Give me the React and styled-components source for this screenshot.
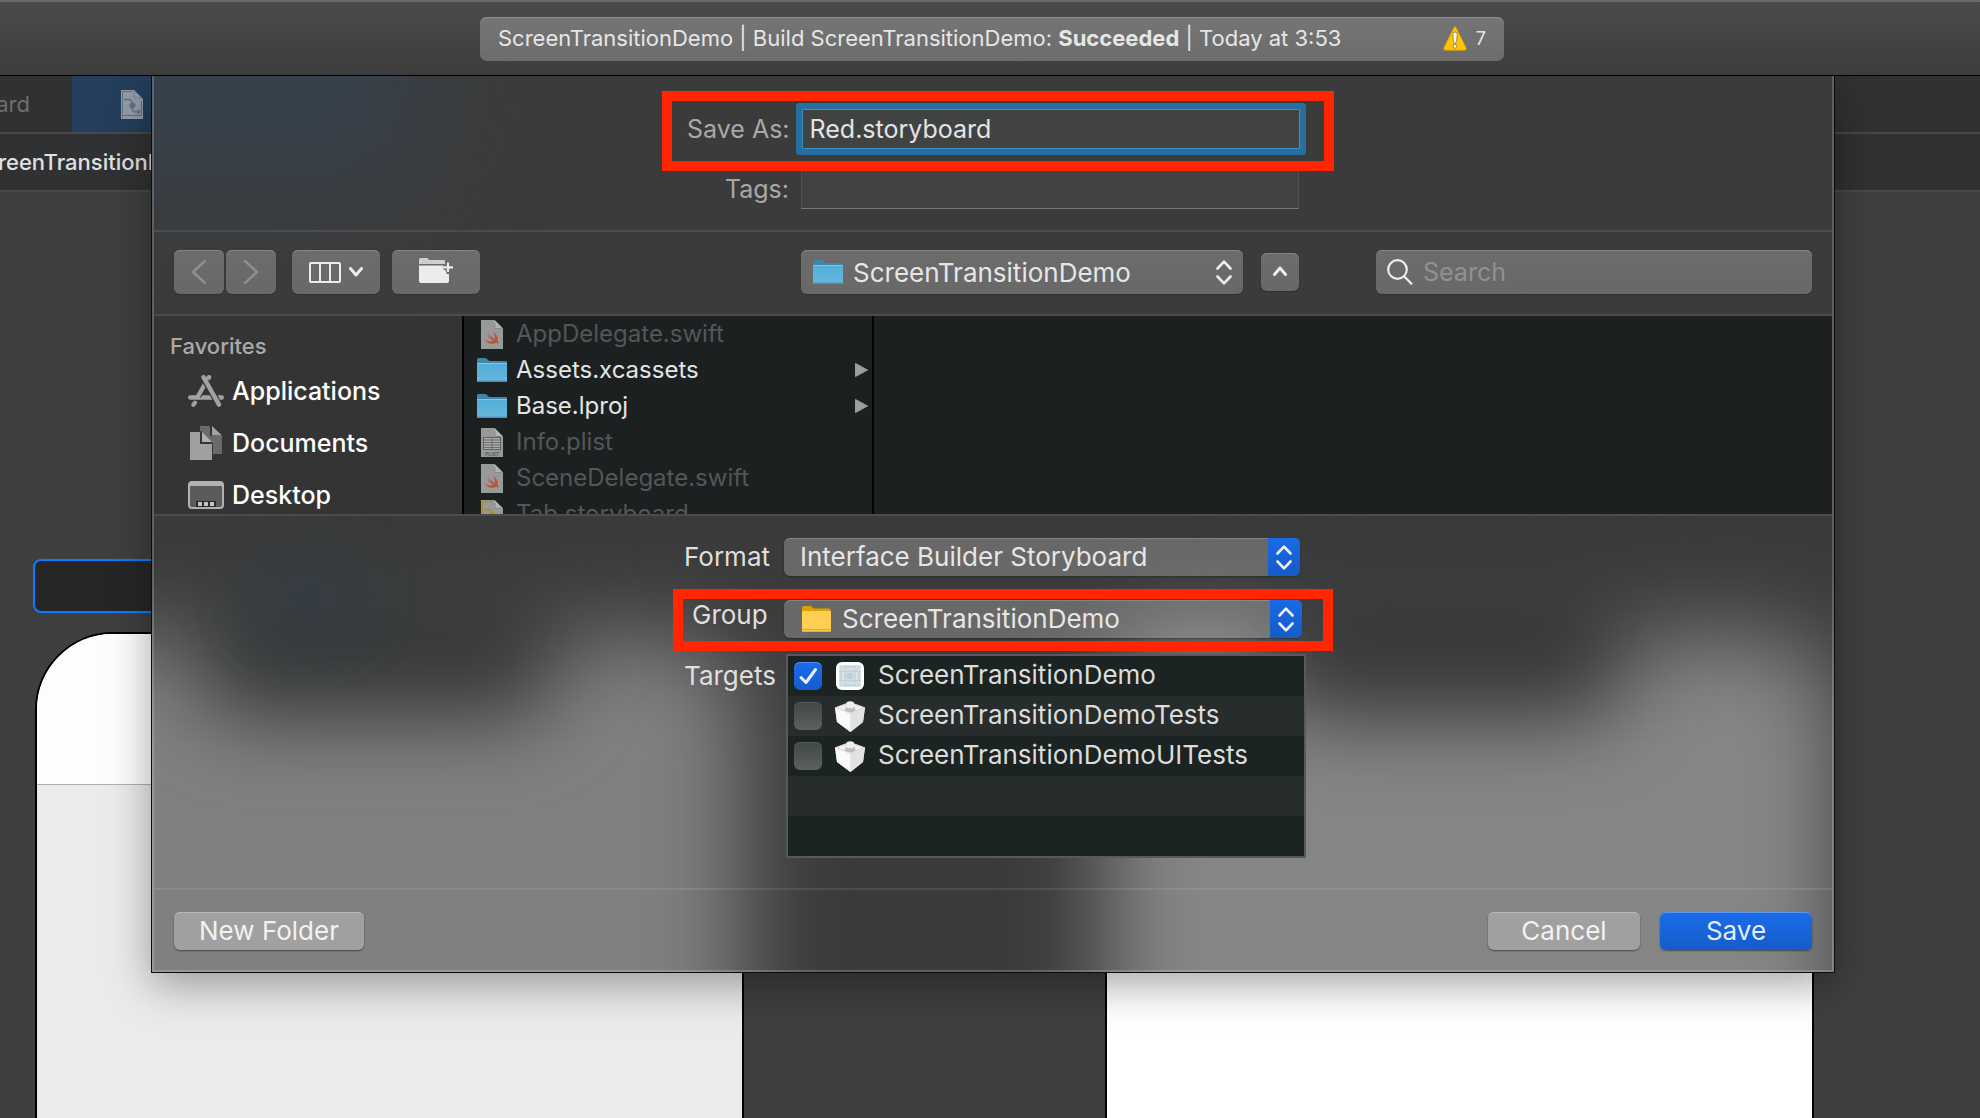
import React, {useState} from 'react'
import styled, {createGlobalStyle, css} from 'styled-components'

const GlobalStyle = createGlobalStyle`
    * {
      box-sizing: border-box;
    }

    body {
      margin: 0;
      background: #3f3f3f;
      font-family: Inter, "Liberation Sans", sans-serif;
      color: #dedede;
    }

    button, input, select {
      font-family: inherit;
      margin: 0;
    }
`

const Window = styled.div`
    display: flex;
    flex-direction: column;
    height: 100vh;
    overflow: hidden;
`

/* ---------- window toolbar ---------- */

const TitleBar = styled.header`
    display: flex;
    flex: none;
    justify-content: center;
    align-items: center;
    height: 76px;
    padding-left: 4px;
    border-top: 2px solid #6a6a6a;
    border-bottom: 1px solid #000;
    background: linear-gradient(#4b4b4b, #3c3c3c);
    position: relative;
    z-index: 2;
`

const Status = styled.div`
    display: flex;
    align-items: center;
    width: 1024px;
    height: 44px;
    padding: 0 18px 1px;
    border-radius: 7px;
    background: linear-gradient(#757575, #6c6c6c);
    box-shadow: inset 0 1px #8e8e8e;
    font-size: 22px;
    color: #e6e6e6;
    white-space: nowrap;

    p {
      flex: 1;
      margin: 0;
    }

    span {
      margin-left: 9px;
      font-size: 18px;
    }
`

/* ---------- editor behind the sheet ---------- */

const Workspace = styled.main`
    flex: 1;
    position: relative;
    display: flex;
    flex-direction: column;
    min-height: 0;
`

const Strip = styled.div`
    display: flex;
    flex: none;
    align-items: center;
    height: 58px;
    border-bottom: 2px solid #474849;
    background: #303133;
    overflow: hidden;
    font-size: 22px;
    white-space: nowrap;
`

const Tab = styled.div`
    display: flex;
    flex: none;
    align-items: center;
    height: 100%;
    width: ${({$active}) => ($active ? '380px' : '72px')};
    justify-content: ${({$active}) => ($active ? 'flex-start' : 'flex-end')};
    padding: ${({$active}) => ($active ? '0 0 0 49px' : '0 42px 0 0')};
    background: ${({$active}) => ($active ? '#243e5b' : 'transparent')};
    color: ${({$active}) => ($active ? '#dedede' : '#6d6e70')};
`

const Crumb = styled.span`
    margin-left: -29px;
    font-weight: 500;
    color: #e0e0e0;
`

const Canvas = styled.div`
    flex: 1;
    position: relative;
    overflow: hidden;
    background: #3f3f3f;
`

const SceneBar = styled.div`
    position: absolute;
    top: 367px;
    left: 33px;
    width: 712px;
    height: 54px;
    border: 2px solid #0a7cff;
    border-radius: 8px;
    background: #262626;
`

const Phone = styled.div`
    position: absolute;
    top: 440px;
    left: ${({$left}) => $left}px;
    width: 709px;
    height: 1400px;
    border: 2px solid #000;
    border-radius: 78px;
    background: ${({$body}) => $body};
    overflow: hidden;
`

const NavArea = styled.div`
    height: 151px;
    border-bottom: 1px solid #b0b0b0;
    background: #fdfdfd;
`

/* ---------- save sheet ---------- */

const Sheet = styled.form`
    position: absolute;
    top: 0;
    left: 151px;
    right: 145px;
    border: 1px solid #0c0c0c;
    border-top: none;
    box-shadow: 0 12px 40px rgba(0, 0, 0, 0.35);
`

/* frosted backdrop: the canvas seen softly through the sheet */
const Glass = styled.div`
    position: absolute;
    inset: 0;
    overflow: hidden;
    background: #3b3b3b;
`

const GlassShape = styled.div`
    position: absolute;
    top: ${({$y}) => $y}px;
    left: ${({$x}) => $x}px;
    width: ${({$w}) => $w}px;
    height: ${({$h}) => $h}px;
    border-radius: ${({$r}) => $r || 0}px;
    background: ${({$color}) => $color};
    filter: blur(${({$blur}) => $blur || 46}px);
`

const SheetInner = styled.div`
    position: relative;
    border: 2px solid rgba(255, 255, 255, 0.19);
    border-top: none;
`

const divider = css`
    border-bottom: 2px solid rgba(255, 255, 255, 0.09);
`

const NameSection = styled.section`
    display: flex;
    flex-direction: column;
    align-items: center;
    gap: 20px;
    height: 156px;
    padding-top: 33px;
    ${divider}
`

const NameRow = styled.div`
    position: relative;
    display: flex;
    align-items: center;
    gap: 12px;
    width: 612px;

    label {
      flex: 1;
      font-size: 25px;
      text-align: right;
      white-space: nowrap;
      color: #a8a8a8;
    }
`

const TextField = styled.input`
    flex: none;
    width: 498px;
    height: 40px;
    padding: 0 7px;
    border: 1px solid ${({$focus}) => ($focus ? '#3f8fc2' : '#505151')};
    border-bottom-color: ${({$focus}) => ($focus ? '#3f8fc2' : '#757575')};
    outline: none;
    border-radius: 0;
    background: #414242;
    color: #e4e4e4;
    font-size: 25px;
    ${({$focus}) => $focus && css`
      border-radius: 1px;
      box-shadow: 0 0 0 6px #276f9e;
    `}
`

/* red marker drawn round a row */
const Marker = styled.div`
    position: absolute;
    inset: ${({$inset}) => $inset};
    border: 10px solid #ff2600;
    pointer-events: none;
    z-index: 3;
`

const BrowserBar = styled.section`
    display: grid;
    grid-template-columns: 11fr 498px 9fr;
    align-items: center;
    height: 84px;
    padding: 0 20px 2px;
    ${divider}
`

const ToolGroup = styled.div`
    display: flex;
    align-items: center;
    gap: ${({$gap}) => $gap || 0}px;
`

const raised = css`
    border: none;
    border-radius: 6px;
    background: linear-gradient(#6c6c6c, #686868);
    box-shadow: inset 0 1px #868686, 0 1px 1px rgba(0, 0, 0, 0.2);
    color: #e6e6e6;
`

const ToolButton = styled.button`
    ${raised}
    display: flex;
    flex: none;
    justify-content: center;
    align-items: center;
    gap: 8px;
    width: ${({$w}) => $w}px;
    height: ${({$h}) => $h || 44}px;
    padding: 0;
`

const PopUp = styled.div`
    position: relative;
    flex: ${({$grow}) => ($grow ? '1' : 'none')};
    width: ${({$w}) => ($w ? `${$w}px` : 'auto')};

    select {
      ${raised}
      appearance: none;
      display: block;
      width: 100%;
      height: ${({$tall}) => ($tall ? '44px' : '38px')};
      padding: 0 48px ${({$tall}) => ($tall ? '0' : '1px')} ${({$pad}) => $pad}px;
      font-size: 26px;
      outline: none;
      ${({$glass}) => $glass && css`
        background: rgba(255, 255, 255, 0.23);
        box-shadow: inset 0 1px rgba(255, 255, 255, 0.18), 0 1px 2px rgba(0, 0, 0, 0.3);
      `}
    }
`

const PopUpIcon = styled.span`
    position: absolute;
    top: 0;
    bottom: 0;
    left: ${({$left}) => $left}px;
    display: flex;
    align-items: center;
    pointer-events: none;
`

const Stepper = styled.span`
    position: absolute;
    top: 0;
    right: 0;
    bottom: 0;
    display: flex;
    justify-content: center;
    align-items: center;
    width: ${({$blue}) => ($blue ? '32px' : '36px')};
    padding-right: ${({$blue}) => ($blue ? '0' : '2px')};
    border-radius: 0 6px 6px 0;
    background: ${({$blue}) => ($blue ? 'linear-gradient(#1a6ae6, #155bc9)' : 'none')};
    pointer-events: none;
`

const SearchBox = styled.label`
    ${raised}
    justify-self: end;
    display: flex;
    align-items: center;
    gap: 10px;
    width: 436px;
    height: 44px;
    padding: 0 11px;

    input {
      flex: 1;
      min-width: 0;
      padding: 0;
      border: none;
      outline: none;
      background: none;
      color: #e6e6e6;
      font-size: 25px;
    }

    input::placeholder {
      color: #919191;
      opacity: 1;
    }
`

const Browser = styled.section`
    display: flex;
    height: 200px;
    overflow: hidden;
    background: #1c2020;
    border-bottom: 2px solid #4b4c4c;
`

const Sidebar = styled.nav`
    width: 310px;
    padding: 15px 0 0 16px;
    border-right: 2px solid #000;
    background: #343434;

    h2 {
      margin: 0 0 4px;
      font-size: 22px;
      line-height: 30px;
      font-weight: 500;
      color: #aaa;
    }
`

const Place = styled.a`
    display: flex;
    align-items: center;
    gap: 8px;
    height: 52px;
    padding-left: 18px;
    font-size: 25px;
    font-weight: 500;
    color: #fff;
    text-decoration: none;

    svg {
      flex: none;
    }
`

const FileColumn = styled.ul`
    width: 410px;
    margin: 0;
    padding: 0 4px 0 13px;
    border-right: 2px solid #000;
    list-style: none;
`

const FileRow = styled.li`
    display: flex;
    align-items: center;
    gap: 9px;
    height: 36px;
    font-size: 24px;
    color: ${({$folder}) => ($folder ? '#e4e5e5' : '#535757')};

    i {
      display: flex;
      justify-content: center;
      width: 30px;
    }

    span {
      flex: 1;
      padding-bottom: 2px;
    }
`

const Options = styled.section`
    display: flex;
    flex-direction: column;
    align-items: center;
    height: 374px;
    padding-top: 22px;
    ${divider}
`

const OptionRow = styled.div`
    position: relative;
    display: flex;
    align-items: flex-start;
    width: 622px;
    margin-bottom: ${({$after}) => $after || 0}px;
`

const OptionLabel = styled.label`
    flex: none;
    width: 102px;
    padding-left: ${({$indent}) => ($indent ? '10px' : '2px')};
    font-size: 26px;
    line-height: ${({$line}) => $line || 38}px;
    color: #dfdfdf;
`

const TargetList = styled.ul`
    flex: none;
    width: 520px;
    height: 204px;
    margin: 0 0 0 2px;
    padding: 0;
    border: 2px solid #575a5a;
    background: repeating-linear-gradient(#1c2423 0 40px, #272d2d 40px 80px);
    list-style: none;
`

const TargetRow = styled.li`
    height: 40px;

    label {
      position: relative;
      display: flex;
      align-items: center;
      height: 100%;
      padding: 0 6px;
      font-size: 26px;
      color: #dcdcdc;
    }

    input {
      appearance: none;
      width: 28px;
      height: 28px;
      margin-right: 13px;
      border-radius: 6px;
      background: linear-gradient(#414747, #5b6160);
      box-shadow: inset 0 1px #565b5b;
    }

    input:checked {
      background: linear-gradient(#1c6bea, #155ccb);
      box-shadow: inset 0 1px #4c8cf0;
    }

    i {
      display: flex;
      width: 30px;
      justify-content: center;
      margin-right: 13px;
    }

    span {
      padding-bottom: 3px;
    }
`

const CheckMark = styled.svg`
    position: absolute;
    left: 6px;
    pointer-events: none;
`

const Actions = styled.footer`
    display: flex;
    gap: 20px;
    height: 80px;
    padding: 22px 20px 0;
`

const PushButton = styled.button`
    width: ${({$wide}) => ($wide ? '190px' : '152px')};
    height: 38px;
    margin-right: ${({$wide}) => ($wide ? 'auto' : '0')};
    padding: 0 0 2px;
    border: none;
    border-radius: 6px;
    background: ${({$primary}) => ($primary ? 'linear-gradient(#1b6cea, #155ccb)' : '#a0a0a0')};
    box-shadow: inset 0 1px ${({$primary}) => ($primary ? '#5c97f0' : '#b9b9b9')}, 0 1px 2px rgba(0, 0, 0, 0.45);
    color: ${({$primary}) => ($primary ? '#e2ecfb' : '#f2f2f2')};
    font-size: 26px;
`

/* ---------- drawings ---------- */

const WarningIcon = () => (
  <svg width="24" height="25" viewBox="0 0 24 25" aria-hidden="true">
    <path d="M10.800 1.800 Q12 -.2 13.200 1.800 L23.200 22 Q23.600 24.200 21.500 24.200 H2.500 Q.4 24.200 .8 22 Z" fill="#fdc20a" stroke="#d9a100" strokeWidth=".8" strokeLinejoin="round" />
    <path d="M12 6 Q14.400 6 14.200 8.200 L13.600 15.500 Q13.400 17 12 17 T10.400 15.500 L9.800 8.200 Q9.600 6 12 6 Z" fill="#fff" stroke="#8f7214" strokeWidth=".8" />
    <circle cx="12" cy="20.300" r="1.900" fill="#fff" stroke="#8f7214" strokeWidth=".8" />
  </svg>
)

const StoryboardDoc = ({tone = '#929daa', line = '#5f7287'}) => (
  <svg width="22" height="29" viewBox="0 0 22 29" aria-hidden="true">
    <path d="M0 0 H13 L22 9 V29 H0 Z" fill={tone} />
    <path d="M13 0 V8 H22" fill="none" stroke={line} strokeWidth="1" opacity=".6" />
    <path d="M1.500 27.500 V1.500 H11 M1.500 25.500 H20.500 V11" fill="none" stroke={line} strokeWidth="1" />
    <path d="M3 9.500 H7 Q11 9.500 11 13 V17 Q11 22 15 22 H19 M16.500 19.500 L19 22 L16.500 24.500" fill="none" stroke={line} strokeWidth="1.300" />
    <circle cx="11.500" cy="15.500" r="3" fill={line} />
  </svg>
)

const Chevron = ({left}) => (
  <svg width="16" height="26" viewBox="0 0 16 26" fill="none" stroke="#8f8f8f" strokeWidth="2.400" strokeLinecap="round" strokeLinejoin="round" aria-hidden="true">
    <path d={left ? 'M14 2 L2 13 L14 24' : 'M2 2 L14 13 L2 24'} />
  </svg>
)

const ColumnsIcon = () => (
  <svg width="32" height="25" viewBox="0 0 32 25" fill="none" stroke="#ececec" strokeWidth="2" aria-hidden="true">
    <rect x="1" y="3" width="30" height="19" rx="1" />
    <path d="M11 3 V22 M21 3 V22" />
  </svg>
)

const SmallChevron = ({up}) => (
  <svg width="14" height="12" viewBox="0 0 14 12" fill="none" stroke="#ececec" strokeWidth="3" strokeLinecap="round" strokeLinejoin="round" aria-hidden="true">
    <path d={up ? 'M1.500 8.500 L7 2 L12.500 8.500' : 'M1.500 2.500 L7 9 L12.500 2.500'} />
  </svg>
)

const NewFolderIcon = () => (
  <svg width="34" height="28" viewBox="0 0 34 28" aria-hidden="true">
    <path d="M0 6 V1.500 Q0 0 1.500 0 H8 Q9.500 0 10 2 H25 Q26 2 26 3 V6 Z" fill="#cfcfcf" />
    <path d="M0 7.500 H25 V12 H27.500 V16 H30 V23 Q30 25 28 25 H2 Q0 25 0 23 Z" fill="#ececec" />
    <path d="M29 4.500 V14 M24.500 9.300 H34" stroke="#6a6a6a" strokeWidth="4.400" />
    <path d="M29 4.500 V14 M24.500 9.300 H34" stroke="#ececec" strokeWidth="2.200" />
  </svg>
)

const BlueFolder = () => (
  <svg width="30" height="24" viewBox="0 0 30 24" aria-hidden="true">
    <defs>
      <linearGradient id="blueFolder" x1="0" y1="0" x2="0" y2="1">
        <stop offset="0" stopColor="#52add9" />
        <stop offset="1" stopColor="#66b8dd" />
      </linearGradient>
    </defs>
    <path d="M0 22 V1.500 Q0 0 1.500 0 H8 Q9.500 0 11 2 Q12 3 13.500 3 H29 Q30 3 30 4 V22 Z" fill="#3f86a8" />
    <path d="M0 5 H30 V22.500 Q30 24 28.500 24 H1.500 Q0 24 0 22.500 Z" fill="url(#blueFolder)" />
    <path d="M0 5.500 H30" stroke="#7ccbee" strokeWidth="1" />
    <path d="M.5 23.200 H29.500" stroke="#478eb0" strokeWidth="1.300" />
  </svg>
)

const YellowFolder = () => (
  <svg width="29" height="26" viewBox="0 0 29 26" aria-hidden="true">
    <path d="M0 24 V2 Q0 0 2 0 H8 Q9.500 0 11 2 Q12 2.500 13 2.500 H27 Q28.500 2.500 28.500 4 V24 Z" fill="#e0a100" />
    <path d="M0 6 Q0 5 1 5 H28 Q29 5 29 6 V24.500 Q29 26 27.500 26 H1.500 Q0 26 0 24.500 Z" fill="#fecf52" />
    <path d="M.5 23.500 H28.500 M.5 25.300 H28.500" stroke="#d9a227" strokeWidth=".8" />
  </svg>
)

const UpDown = () => (
  <svg width="16" height="25" viewBox="0 0 16 25" fill="none" stroke="#efefef" strokeWidth="2.600" strokeLinecap="round" strokeLinejoin="round" aria-hidden="true">
    <path d="M1.500 8.500 L8 1.700 L14.500 8.500 M1.500 16.500 L8 23.300 L14.500 16.500" />
  </svg>
)

const SearchIcon = () => (
  <svg width="26" height="26" viewBox="0 0 26 26" fill="none" stroke="#ededed" strokeWidth="2.200" aria-hidden="true">
    <circle cx="10.500" cy="10.500" r="9.300" />
    <path d="M17 17.200 L25 25.300" />
  </svg>
)

const AppsIcon = () => (
  <svg width="36" height="32" viewBox="0 0 36 32" fill="none" strokeLinecap="round" aria-hidden="true">
    <path d="M2.200 22.500 H33.800" stroke="#a2a2a2" strokeWidth="4.400" />
    <path d="M21 2.200 L10 21" stroke="#343434" strokeWidth="6.500" strokeLinecap="butt" />
    <path d="M21 2.200 L9.500 22" stroke="#a2a2a2" strokeWidth="4.400" />
    <path d="M7 27.600 L5.400 29.800" stroke="#a2a2a2" strokeWidth="4.200" />
    <path d="M17.500 6 L29 26" stroke="#343434" strokeWidth="6.600" strokeLinecap="butt" />
    <path d="M15.500 2.200 L31 29.600" stroke="#a2a2a2" strokeWidth="4.400" />
  </svg>
)

const DocumentsIcon = () => (
  <svg width="36" height="34" viewBox="0 0 36 34" aria-hidden="true">
    <path d="M12 0 H22 V10 H34 V28 H25 V18 L12 5 Z" fill="#6a6a6a" />
    <path d="M24 0 L34 9.500 H24 Z" fill="#a2a2a2" />
    <path d="M2 6 H12 V18 H24 V34 H2 Z" fill="#a0a0a0" />
    <path d="M14 6 L24 16 H14 Z" fill="#b0b0b0" />
    <path d="M13 5 V17 H24.500" fill="none" stroke="#343434" strokeWidth="1.400" />
  </svg>
)

const DesktopIcon = () => (
  <svg width="36" height="28" viewBox="0 0 36 28" aria-hidden="true">
    <rect x="1" y="1" width="34" height="26" rx="3" fill="#5b5b5b" stroke="#b2b2b2" strokeWidth="2" />
    <path d="M1 5 V3 Q1 1 3 1 H33 Q35 1 35 3 V5 Z" fill="#b2b2b2" />
    <rect x="8" y="20" width="20" height="6" fill="#2c2c2c" />
    <path d="M10 21 h4 v4 h-4z M16 21 h4 v4 h-4z M22 21 h4 v4 h-4z" fill="#c4c4c4" />
  </svg>
)

const DocShape = ({children}) => (
  <svg width="22" height="29" viewBox="0 0 22 29" aria-hidden="true">
    <path d="M0 0 H13.500 L22 8.500 V29 H0 Z" fill="#989999" />
    <path d="M13.500 0 V8.500 H22 Z" fill="#b3b3b3" />
    <path d="M14 3 V8.500 H20" fill="none" stroke="#7c7c7c" strokeWidth=".8" />
    {children}
  </svg>
)

const SwiftDoc = () => (
  <DocShape>
    <path
      transform="translate(3.500 12)"
      d="M0 6.500 C2.500 9.300 6 10.300 9 8.800 C6 7 3 4 1.500 1.500 C3.800 4 6 5.500 7.500 6.400 C6 5 4 2.500 3 1 C6 4 8.500 6 10.500 7.500 C11 5 10 2.500 8.500 .3 C12 2.500 13.800 5.500 13 9 C14.200 10.200 14.200 11.800 13.800 12 C13 10.700 12 10.600 11 11 C7 13 2 11 0 6.500Z"
      fill="#bf503a"
    />
  </DocShape>
)

const PlistDoc = () => (
  <DocShape>
    <rect x="2.500" y="9.500" width="17" height="12" fill="#aaa" stroke="#5f6060" strokeWidth="1" />
    <path d="M3 12 H19 M3 14.500 H19 M3 17 H19 M3 19.500 H19 M11 9.500 V21.500" stroke="#6b6b6b" strokeWidth="1" />
    <text x="11" y="28" textAnchor="middle" fontSize="5" fontWeight="700" fill="#606060">PLIST</text>
  </DocShape>
)

const TabDoc = () => (
  <DocShape>
    <path d="M1.500 29 V1.500 H12 M3 9.500 H8 Q11 9.500 11 13" fill="none" stroke="#b08b2c" strokeWidth="1.400" />
    <circle cx="11.500" cy="15" r="3.500" fill="#b08b2c" />
  </DocShape>
)

const Disclosure = () => (
  <svg width="13" height="14" viewBox="0 0 13 14" aria-hidden="true">
    <path d="M.5 .5 L12.500 7 L.5 13.500 Z" fill="#9c9d9d" stroke="#9c9d9d" strokeLinejoin="round" />
  </svg>
)

const AppTargetIcon = () => (
  <svg width="28" height="28" viewBox="0 0 28 28" aria-hidden="true">
    <rect width="28" height="28" rx="6" fill="#fff" />
    <rect x="3" y="3" width="22" height="22" rx="3" fill="#dbe6ea" />
    <g fill="none" stroke="#b9ccd4" strokeWidth=".7">
      <rect x="4.500" y="4.500" width="19" height="19" rx="2" />
      <path d="M9.500 3 V25 M18.500 3 V25 M3 9.500 H25 M3 18.500 H25 M3 3 L25 25 M25 3 L3 25" />
      <circle cx="14" cy="14" r="9" />
      <circle cx="14" cy="14" r="6" />
    </g>
    <circle cx="14" cy="14" r="3.600" fill="#bdd0d8" />
  </svg>
)

const TestTargetIcon = () => (
  <svg width="30" height="31" viewBox="0 0 30 31" aria-hidden="true">
    <path d="M0 6.500 L15 1 L30 6.500 L28 21 L15.500 31 L2 21 Z" fill="#ececec" />
    <path d="M0 6.500 L15.500 13 V31 L2 21 Z" fill="#fafafa" />
    <path d="M30 6.500 L15.500 13 V31 L28 21 Z" fill="#e2e2e2" />
    <path d="M0 6.500 L15 1 L30 6.500 L15.500 13 Z" fill="#d9d9d9" />
    <path d="M3 6.500 L10 4 L12 7 L8 9 Z M27 6.500 L20 4 L18 7 L22 9 Z" fill="#f2f2f2" />
    <path d="M10.500 5 V9.500 Q15 12.500 20 9.500 V5 Z" fill="#bdbdbd" />
    <ellipse cx="15.200" cy="5" rx="4.800" ry="2.300" fill="#efefef" />
    <ellipse cx="15.200" cy="1.700" rx="3.600" ry="1.500" fill="#f4f4f4" />
  </svg>
)

const places = [
  {name: 'Applications', Icon: AppsIcon},
  {name: 'Documents', Icon: DocumentsIcon},
  {name: 'Desktop', Icon: DesktopIcon},
]

const files = [
  {name: 'AppDelegate.swift', Icon: SwiftDoc},
  {name: 'Assets.xcassets', Icon: BlueFolder, folder: true},
  {name: 'Base.lproj', Icon: BlueFolder, folder: true},
  {name: 'Info.plist', Icon: PlistDoc},
  {name: 'SceneDelegate.swift', Icon: SwiftDoc},
  {name: 'Tab.storyboard', Icon: TabDoc},
]

const targetIcons = {
  ScreenTransitionDemo: AppTargetIcon,
  ScreenTransitionDemoTests: TestTargetIcon,
  ScreenTransitionDemoUITests: TestTargetIcon,
}

const App = () => {
  const [fileName, setFileName] = useState('Red.storyboard')
  const [targets, setTargets] = useState({
    ScreenTransitionDemo: true,
    ScreenTransitionDemoTests: false,
    ScreenTransitionDemoUITests: false,
  })

  const toggleTarget = (name) => {
    setTargets({...targets, [name]: !targets[name]})
  }

  return (
    <Window>
      <GlobalStyle />
      <TitleBar>
        <Status>
          <p>ScreenTransitionDemo | Build ScreenTransitionDemo: <b>Succeeded</b> | Today at 3:53</p>
          <WarningIcon />
          <span>7</span>
        </Status>
      </TitleBar>

      <Workspace>
        <Strip>
          <Tab>Main.storyboard</Tab>
          <Tab $active><StoryboardDoc /></Tab>
        </Strip>
        <Strip>
          <Crumb>ScreenTransitionDemo</Crumb>
        </Strip>
        <Canvas>
          <SceneBar />
          <Phone $left={35} $body="#ebebeb">
            <NavArea />
          </Phone>
          <Phone $left={1105} $body="#fff" />
        </Canvas>

        <Sheet onSubmit={(e) => e.preventDefault()}>
          <Glass>
            <GlassShape $x={-140} $y={-80} $w={400} $h={180} $color="#36424e" $blur={60} />
            <GlassShape $x={-150} $y={560} $w={740} $h={700} $r={78} $color="#808080" />
            <GlassShape $x={954} $y={560} $w={735} $h={700} $r={78} $color="#868686" />
            <GlassShape $x={50} $y={480} $w={350} $h={162} $r={40} $color="#383a3b" $blur={42} />
            <GlassShape $x={1120} $y={480} $w={350} $h={162} $r={40} $color="#38393a" $blur={42} />
            <GlassShape $x={110} $y={490} $w={90} $h={60} $r={30} $color="#333d45" $blur={30} />
          </Glass>
          <SheetInner>
            <NameSection>
              <NameRow>
                <label htmlFor="saveAs">Save As:</label>
                <TextField id="saveAs" $focus value={fileName} onChange={(e) => setFileName(e.target.value)} />
                <Marker $inset="-18px -35px -22px -25px" />
              </NameRow>
              <NameRow>
                <label htmlFor="tags">Tags:</label>
                <TextField id="tags" />
              </NameRow>
            </NameSection>

            <BrowserBar>
              <ToolGroup $gap={16}>
                <ToolGroup $gap={2}>
                  <ToolButton type="button" $w={50} aria-label="Back"><Chevron left /></ToolButton>
                  <ToolButton type="button" $w={50} aria-label="Forward"><Chevron /></ToolButton>
                </ToolGroup>
                <ToolGroup $gap={12}>
                  <ToolButton type="button" $w={88} aria-label="View"><ColumnsIcon /><SmallChevron /></ToolButton>
                  <ToolButton type="button" $w={88} aria-label="Create folder"><NewFolderIcon /></ToolButton>
                </ToolGroup>
              </ToolGroup>
              <ToolGroup $gap={18}>
                <PopUp $grow $tall $pad={52}>
                  <select aria-label="Location">
                    <option>ScreenTransitionDemo</option>
                  </select>
                  <PopUpIcon $left={12}><BlueFolder /></PopUpIcon>
                  <Stepper><UpDown /></Stepper>
                </PopUp>
                <ToolButton type="button" $w={38} $h={38} aria-label="Collapse"><SmallChevron up /></ToolButton>
              </ToolGroup>
              <SearchBox>
                <SearchIcon />
                <input type="text" placeholder="Search" aria-label="Search" />
              </SearchBox>
            </BrowserBar>

            <Browser>
              <Sidebar>
                <h2>Favorites</h2>
                {places.map(({name, Icon}) => (
                  <Place href="#" key={name}><Icon />{name}</Place>
                ))}
              </Sidebar>
              <FileColumn>
                {files.map(({name, Icon, folder}) => (
                  <FileRow key={name} $folder={folder}>
                    <i><Icon /></i>
                    <span>{name}</span>
                    {folder && <Disclosure />}
                  </FileRow>
                ))}
              </FileColumn>
            </Browser>

            <Options>
              <OptionRow $after={24}>
                <OptionLabel htmlFor="format">Format</OptionLabel>
                <PopUp $glass $w={516} $pad={16}>
                  <select id="format">
                    <option>Interface Builder Storyboard</option>
                  </select>
                  <Stepper $blue><UpDown /></Stepper>
                </PopUp>
              </OptionRow>
              <OptionRow $after={16}>
                <OptionLabel htmlFor="group" $indent $line={30}>Group</OptionLabel>
                <PopUp $glass $w={518} $pad={58}>
                  <select id="group">
                    <option>ScreenTransitionDemo</option>
                  </select>
                  <PopUpIcon $left={18}><YellowFolder /></PopUpIcon>
                  <Stepper $blue><UpDown /></Stepper>
                </PopUp>
                <Marker $inset="-11px -29px -13px -9px" />
              </OptionRow>
              <OptionRow>
                <OptionLabel as="span" id="targets" $line={44}>Targets</OptionLabel>
                <TargetList aria-labelledby="targets">
                  {Object.keys(targets).map((name) => {
                    const Icon = targetIcons[name]
                    return (
                      <TargetRow key={name}>
                        <label>
                          <input type="checkbox" checked={targets[name]} onChange={() => toggleTarget(name)} />
                          {targets[name] && (
                            <CheckMark width="28" height="28" viewBox="0 0 28 28" aria-hidden="true">
                              <path d="M7 15.500 L12 20.500 L21.500 7.500" fill="none" stroke="#e8f0fc" strokeWidth="3" strokeLinecap="round" strokeLinejoin="round" />
                            </CheckMark>
                          )}
                          <i><Icon /></i>
                          <span>{name}</span>
                        </label>
                      </TargetRow>
                    )
                  })}
                </TargetList>
              </OptionRow>
            </Options>

            <Actions>
              <PushButton type="button" $wide>New Folder</PushButton>
              <PushButton type="button">Cancel</PushButton>
              <PushButton type="submit" $primary>Save</PushButton>
            </Actions>
          </SheetInner>
        </Sheet>
      </Workspace>
    </Window>
  )
}

export default App
